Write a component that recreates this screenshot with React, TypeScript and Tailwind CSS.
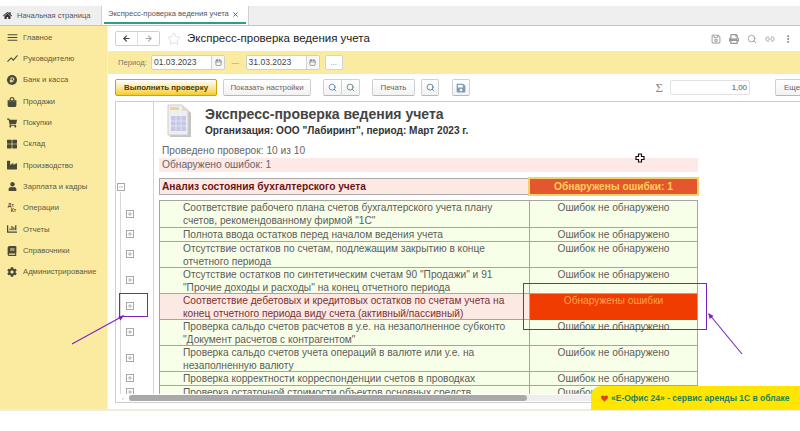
import { ArrowLeft, ArrowRight, Calendar, Link2, MoreVertical, Plus, Minus, Search, Star, X } from "lucide-react";
import {
  FaBook,
  FaChartBar,
  FaCog,
  FaHeart,
  FaHome,
  FaIndustry,
  FaRegSave,
  FaSave,
  FaShoppingBag,
  FaShoppingCart,
  FaThLarge,
  FaUser,
  FaRubleSign,
  FaPrint,
} from "react-icons/fa";
import { MdMenu, MdShowChart } from "react-icons/md";
import type { ReactNode } from "react";

const menu: Array<[ReactNode, string]> = [
  [<MdMenu size={13} />, "Главное"],
  [<MdShowChart size={13} />, "Руководителю"],
  [
    <span className="flex h-[10px] w-[10px] items-center justify-center rounded-full bg-[#4a4a3c]">
      <FaRubleSign size={6} className="text-[#fbeca0]" />
    </span>,
    "Банк и касса",
  ],
  [<FaShoppingBag size={10} />, "Продажи"],
  [<FaShoppingCart size={10} />, "Покупки"],
  [<FaThLarge size={10} />, "Склад"],
  [<FaIndustry size={10} />, "Производство"],
  [<FaUser size={9} />, "Зарплата и кадры"],
  [<span className="text-[5px] leading-[5px] font-bold">Дт<br />&nbsp;&nbsp;Кт</span>, "Операции"],
  [<FaChartBar size={10} />, "Отчеты"],
  [<FaBook size={10} />, "Справочники"],
  [<FaCog size={10} />, "Администрирование"],
];

type Row = { lines: string[]; h: string; bad?: boolean };

const rows: Row[] = [
  { lines: ["Соответствие рабочего плана счетов бухгалтерского учета плану", "счетов, рекомендованному фирмой \"1С\""], h: "h-[27px]" },
  { lines: ["Полнота ввода остатков перед началом ведения учета"], h: "h-[14px]" },
  { lines: ["Отсутствие остатков по счетам, подлежащим закрытию в конце", "отчетного периода"], h: "h-[26px]" },
  { lines: ["Отсутствие остатков по синтетическим счетам 90 \"Продажи\" и 91", "\"Прочие доходы и расходы\" на конец отчетного периода"], h: "h-[26px]" },
  { lines: ["Соответствие дебетовых и кредитовых остатков по счетам учета на", "конец отчетного периода виду счета (активный/пассивный)"], h: "h-[26px]", bad: true },
  { lines: ["Проверка сальдо счетов расчетов в у.е. на незаполненное субконто", "\"Документ расчетов с контрагентом\""], h: "h-[26px]" },
  { lines: ["Проверка сальдо счетов учета операций в валюте или у.е. на", "незаполненную валюту"], h: "h-[26px]" },
  { lines: ["Проверка корректности корреспонденции счетов в проводках"], h: "h-[14px]" },
  { lines: ["Проверка остаточной стоимости объектов основных средств"], h: "h-[14px]" },
];

function TreeBox({ minus }: { minus?: boolean }) {
  return (
    <span className="flex h-[8px] w-[8px] items-center justify-center border border-[#a8a8a8] bg-white text-[#777]">
      {minus ? <Minus size={6} strokeWidth={2} /> : <Plus size={6} strokeWidth={2} />}
    </span>
  );
}

function Btn({ children, className }: { children: ReactNode; className?: string }) {
  return (
    <div
      className={`flex h-[17px] items-center justify-center rounded-[2px] border border-[#d0d0d0] border-b-[#b8b8b8] bg-gradient-to-b from-white to-[#f2f2f2] text-[7.9px] whitespace-nowrap text-[#666] ${className ?? ""}`}
    >
      {children}
    </div>
  );
}

function DateField({ value }: { value: string }) {
  return (
    <div className="flex h-[15px] w-[74px] items-center rounded-[2px] border border-[#cfcfcf] bg-white text-[8.5px] text-[#444]">
      <span className="flex-1 pl-[2px]">{value}</span>
      <span className="flex h-full w-[13px] items-center justify-center border-l border-[#cfcfcf] bg-[#f7f7f7] text-[#666]">
        <Calendar size={7} />
      </span>
    </div>
  );
}

export default function App() {
  return (
    <div className="relative flex h-[431px] w-[800px] flex-col overflow-hidden bg-white font-['Liberation_Sans',Arial,sans-serif]">
      {/* Section tabs */}
      <div className="mt-[6px] flex h-[20px] shrink-0 border-b border-[#c4c4c4] bg-[#efefef]">
        <div className="flex w-[102px] items-center border-r border-[#cfcfcf] pl-[2px] text-[7.6px] whitespace-nowrap text-[#555]">
          <FaHome size={9} className="mr-[5px] ml-[1px] text-[#333]" />
          Начальная страница
        </div>
        <div className="w-[147px] border-r border-[#cfcfcf] bg-white px-[2px] pb-[1px]">
          <div className="flex h-full items-center border-b-2 border-[#2f9e79] pl-[4px] text-[7.6px] whitespace-nowrap text-[#555]">
            Экспресс-проверка ведения учета
            <X size={7} strokeWidth={3} className="ml-[3px] text-[#555]" />
          </div>
        </div>
      </div>

      <div className="flex h-[383px] shrink-0">
        {/* Left menu */}
        <nav className="flex w-[108px] shrink-0 flex-col border-r-[1px] border-[#f4f1e0] bg-[#fbeba1] pt-[1px]">
          {menu.map(([icon, label]) => (
            <div key={label} className="flex h-[21.3px] items-center text-[7.7px] text-[#5e5a3c]">
              <span className="flex w-[23px] shrink-0 justify-center pl-[1px] text-[#4a4a3c]">{icon}</span>
              {label}
            </div>
          ))}
        </nav>

        <main className="flex min-w-0 flex-1 flex-col">
          {/* Title */}
          <div className="flex h-[25px] shrink-0 items-center pl-[7px]">
            <div className="flex h-[15px] w-[45px] rounded-[2px] border border-[#d0d0d0] bg-white">
              <span className="flex flex-1 items-center justify-center border-r border-[#e0e0e0] text-[#444]">
                <ArrowLeft size={9} strokeWidth={3} />
              </span>
              <span className="flex flex-1 items-center justify-center text-[#aaa]">
                <ArrowRight size={9} strokeWidth={3} />
              </span>
            </div>
            <Star size={14} strokeWidth={1} className="ml-[7px] text-[#c8c8c8]" />
            <h1 className="ml-[6px] text-[11.5px] leading-none text-[#222]">Экспресс-проверка ведения учета</h1>
            <div className="ml-auto flex items-center gap-[8px] pr-[7px] text-[#999]">
              <FaRegSave size={10} />
              <FaPrint size={10} />
              <Search size={10} />
              <Link2 size={10} />
              <MoreVertical size={10} className="text-[#666]" />
            </div>
          </div>

          {/* Period */}
          <div className="flex h-[23px] shrink-0 items-center bg-[#fbeba1] pl-[10px] text-[7.6px] text-[#777]">
            <span className="w-[33px] shrink-0">Период:</span>
            <DateField value="01.03.2023" />
            <span className="mx-[6.5px] text-[#999]">—</span>
            <DateField value="31.03.2023" />
            <div className="ml-[5px] flex h-[15px] w-[18px] items-center justify-center rounded-[2px] border border-[#d4d4d4] bg-white text-[#888]">
              ...
            </div>
          </div>

          {/* Command bar */}
          <div className="flex h-[27px] shrink-0 items-center pl-[7px]">
            <Btn className="w-[102px] !border-[#c9a800] from-[#ffe74a] to-[#f5cc00] font-bold !text-[#4c4000]">Выполнить проверку</Btn>
            <Btn className="ml-[6px] w-[88px]">Показать настройки</Btn>
            <div className="ml-[12px] flex">
              <Btn className="w-[19px] rounded-r-none text-[#4d7aa8]">
                <Search size={9} className="text-[#3f79ad]" />
              </Btn>
              <Btn className="w-[18px] rounded-l-none border-l-0">
                <Search size={9} className="text-[#44707c]" />
              </Btn>
            </div>
            <Btn className="ml-[12px] w-[43px]">Печать</Btn>
            <Btn className="ml-[6px] w-[18px]">
              <Search size={9} className="text-[#2e6d94]" />
            </Btn>
            <Btn className="ml-[13px] w-[18px]">
              <FaSave size={10} className="text-[#7f9cb5]" />
            </Btn>
            <span className="ml-auto font-['Liberation_Serif',serif] text-[13px] text-[#888]">Σ</span>
            <div className="ml-[7px] flex h-[15px] w-[80px] items-center justify-end rounded-[2px] border border-[#e2e2e2] bg-white pr-[2px] text-[7.9px] text-[#555]">
              1,00
            </div>
            <Btn className="ml-[25px] w-[25px] shrink-0 justify-start rounded-r-none border-r-0 pl-[8px]">Еще</Btn>
          </div>

          {/* Report */}
          <section className="ml-[7px] flex h-[302px] shrink-0 flex-col border-t border-l border-b border-[#cfcfcf]">
            <div className="flex h-[292px] overflow-hidden">
              <div className="flex w-[38px] shrink-0 flex-col border-r border-[#d4d4d4] pl-[1px]">
                <div className="flex h-[90px] shrink-0 items-end pb-[1px]">
                  <TreeBox minus />
                </div>
                <div className="ml-[3px] flex flex-1 flex-col border-l border-[#d8d8d8] pt-[8px]">
                  {rows.map((r) => (
                    <div key={r.lines[0]} className={`flex shrink-0 items-center pl-[5px] ${r.h}`}>
                      <TreeBox />
                    </div>
                  ))}
                </div>
              </div>

              <div className="w-[544px] shrink-0 pl-[5px]">
                <div className="flex h-[42px] items-start pt-[2px] pl-[8px]">
                  <svg width="25" height="34" viewBox="0 0 25 34" className="shrink-0">
                    <path d="M3 3h15l6 6v24H3z" fill="#c4c4c4" />
                    <path d="M1 1h14l6 6v24H1z" fill="#eeeef4" stroke="#cfcfcf" />
                    <path d="M15 1v6h6z" fill="#dcdcd0" />
                    <rect x="3" y="3" width="9" height="3" fill="#e4d98c" />
                    <rect x="4" y="12" width="15" height="15" fill="#c4c8e6" />
                    <path d="M4 17h15M4 22h15M9 12v15M14 12v15" stroke="#eeeef4" strokeWidth="0.7" />
                  </svg>
                  <div className="mt-[1px] ml-[13px]">
                    <div className="text-[14px] leading-[19px] font-bold whitespace-nowrap text-[#444]">Экспресс-проверка ведения учета</div>
                    <div className="text-[10.1px] leading-[13px] font-bold whitespace-nowrap text-[#333]">Организация: ООО "Лабиринт", период: Март 2023 г.</div>
                  </div>
                </div>
                <div className="flex h-[14px] items-center pl-[3px] text-[10.2px] text-[#666]">Проведено проверок: 10 из 10</div>
                <div className="flex h-[14px] items-center bg-[#fde9e6] pl-[3px] text-[10.2px] text-[#666]">Обнаружено ошибок: 1</div>

                <div className="mt-[6px] grid h-[17px] grid-cols-[368px_169px] border border-[#aaa] bg-[#fde9e4] text-[10.2px] font-bold">
                  <div className="flex items-center pl-[2px] text-[#6b1414]">Анализ состояния бухгалтерского учета</div>
                  <div className="z-10 -my-[2px] -mr-[2px] flex items-center justify-center border-2 border-[#f2d36a] bg-[#e4572e] text-[#ffd05a]">
                    Обнаружены ошибки: 1
                  </div>
                </div>

                <div className="mt-[5px] border-t border-l border-r border-[#a6a6a0] text-[10.2px] leading-[13px]">
                  {rows.map((r) => (
                    <div
                      key={r.lines[0]}
                      className={`grid grid-cols-[370px_167px] border-b border-[#a6a6a0] ${r.h} ${r.bad ? "bg-[#fde9e4] text-[#7a3232]" : "bg-[#f8ffe8] text-[#5c5c5c]"}`}
                    >
                      <div className="border-r border-[#a6a6a0] pl-[23px] whitespace-nowrap">
                        {r.lines.map((l) => (
                          <div key={l}>{l}</div>
                        ))}
                      </div>
                      {r.bad ? (
                        <div className="bg-[#f03c00] text-center text-[#ffa24d]">Обнаружены ошибки</div>
                      ) : (
                        <div className="text-center">Ошибок не обнаружено</div>
                      )}
                    </div>
                  ))}
                </div>
              </div>
            </div>

            {/* Horizontal scrollbar */}
            <div className="flex h-[8px] items-center pl-[6px]">
              <span className="mr-[5px] text-[6px] leading-none text-[#aaa]">‹</span>
              <div className="h-[6px] flex-1 bg-[#eee]">
                <div className="h-full w-[398px] rounded-[3px] bg-[#a9a9a9]" />
              </div>
            </div>
          </section>
        </main>
      </div>
      <div className="h-[2px] shrink-0 bg-[#eeeee0]" />

      {/* Annotations drawn over the screenshot */}
      <div className="absolute top-[293px] left-[119px] h-[24px] w-[29px] border-[1.5px] border-[#7b22c4]" />
      <div className="absolute top-[283px] left-[523px] h-[47px] w-[184px] border-[1.5px] border-[#7b22c4]" />
      <svg className="absolute inset-0" width="800" height="431" fill="#7b22c4" stroke="#7b22c4" strokeWidth="1.1">
        <path d="M72 344L123 316" />
        <path d="M123 316l-4 1 1.5 2.5z" />
        <path d="M742 354L709 314" />
        <path d="M709 314l1 4 2.5-2z" />
      </svg>
      <svg className="absolute top-[153px] left-[635px]" width="10" height="10" viewBox="0 0 10 10">
        <path d="M3.5 1h3v2.5H9v3H6.5V9h-3V6.5H1v-3h2.5z" fill="#fff" stroke="#111" strokeWidth="1.2" />
      </svg>

      <div className="absolute top-[386px] left-[591px] flex h-[24px] w-[209px] items-center rounded-tl-[10px] bg-[#ffe600] pl-[10px] text-[8.5px] font-bold whitespace-nowrap text-[#23805f]">
        <FaHeart size={7} className="mr-[3px] text-[#e0431a]" />
        «Е-Офис 24» - сервис аренды 1С в облаке
      </div>
    </div>
  );
}
